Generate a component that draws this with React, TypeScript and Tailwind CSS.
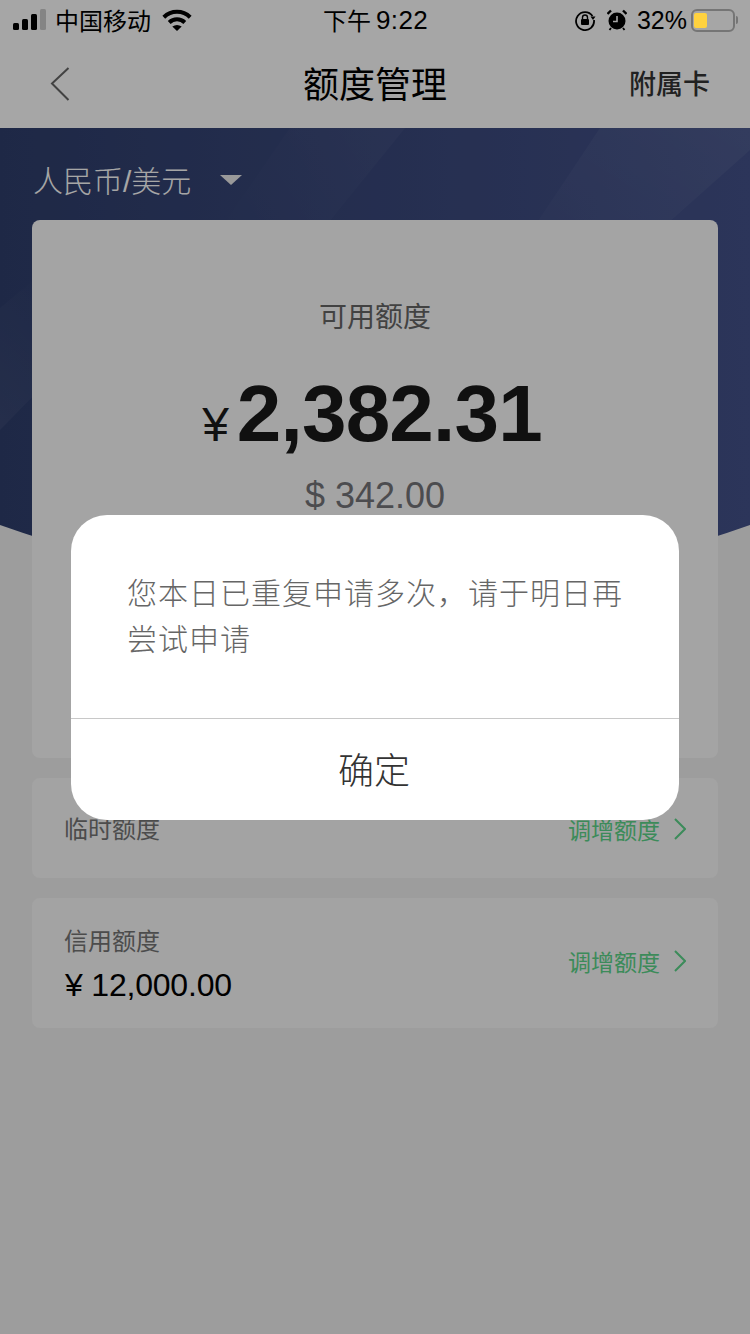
const latin = "font-['Liberation_Sans','Noto_Sans_CJK_SC',sans-serif]";

function StatusBar() {
  return (
    <div className="relative z-10 flex h-10 items-center bg-[#a6a6a6] pl-[13px] pr-[12px] text-[26px] text-black">
      <div className="flex w-[260px] items-center">
        <svg width="34" height="22" viewBox="0 0 34 22" className="mt-[-1px]">
          <rect x="0" y="14" width="6" height="7" rx="1.5" fill="#000" />
          <rect x="9" y="10" width="6" height="11" rx="1.5" fill="#000" />
          <rect x="18" y="5" width="6" height="16" rx="1.5" fill="#000" />
          <rect x="27" y="0" width="6" height="21" rx="1.5" fill="#000" opacity="0.2" />
        </svg>
        <span className="ml-[8px] text-[24px] leading-none">中国移动</span>
        <svg width="30" height="22" viewBox="0 0 30 22" className="ml-[11px]">
          <path d="M1.800 8.200a19 19 0 0 1 26.400 0" fill="none" stroke="#000" strokeWidth="4" />
          <path d="M7.200 13.500a11.200 11.200 0 0 1 15.600 0" fill="none" stroke="#000" strokeWidth="4" />
          <path d="M10.300 17.600q4.700-3.200 9.400 0L15 22Z" fill="#000" />
        </svg>
      </div>
      <div className="flex flex-1 items-center justify-center text-[24px] leading-none">
        下午
        <span className={`${latin} ml-[5px] text-[26px] tracking-[0.3px]`}>9:22</span>
      </div>
      <div className="flex w-[260px] items-center justify-end">
        <svg width="22" height="22" viewBox="0 0 22 22">
          <path d="M18.500 7A9 9 0 1 0 20 11" fill="none" stroke="#000" strokeWidth="1.800" />
          <path d="M16.500 7.500h5l-2.500 3.500Z" fill="#000" />
          <rect x="7" y="10" width="8" height="6" rx="1" fill="#000" />
          <path d="M8.500 10V8.500a2.500 2.500 0 0 1 5 0V10" fill="none" stroke="#000" strokeWidth="1.400" />
        </svg>
        <svg width="20" height="22" viewBox="0 0 20 22" className="ml-[11px]">
          <circle cx="10" cy="12" r="8.500" fill="#000" />
          <path d="M10 7v5.500H6" fill="none" stroke="#a6a6a6" strokeWidth="1.600" />
          <path d="M.5 5 4 1.500M19.500 5 16 1.500" stroke="#000" strokeWidth="2.400" />
          <path d="M4 19 2.500 21M16 19l1.500 2" stroke="#000" strokeWidth="1.800" />
        </svg>
        <span className={`${latin} ml-[10px] text-[25px] leading-none`}>32%</span>
        <div className="ml-[4px] flex items-center">
          <div className="h-[23px] w-[44px] rounded-[6px] border-2 border-[#757575] px-[1px] py-[2px]">
            <div className="h-full w-[13px] rounded-[2px] bg-[#ffd23f]" />
          </div>
          <div className="ml-[1px] h-[8px] w-[2px] rounded-r-full bg-[#757575]" />
        </div>
      </div>
    </div>
  );
}

function NavBar() {
  return (
    <div className="grid h-[88px] grid-cols-[1fr_auto_1fr] items-center bg-white pb-[4px] pl-[50px] pr-[40px]">
      <svg width="20" height="34" viewBox="0 0 20 34" className="mt-[3px]">
        <path d="M18.500 1 2 16.500 18.500 33" fill="none" stroke="#666" strokeWidth="2" />
      </svg>
      <div className="ml-[-10px] text-[36px] leading-none text-black">额度管理</div>
      <span className="justify-self-end text-[27px] font-medium leading-none text-[#333]">附属卡</span>
    </div>
  );
}

function HeroBackground() {
  return (
    <svg className="absolute left-0 top-0" width="750" height="412" viewBox="0 0 750 412">
      <defs>
        <linearGradient id="hero" x1="0" y1="0" x2="1" y2="0">
          <stop offset="0" stopColor="#2f3e6c" />
          <stop offset="1" stopColor="#44528a" />
        </linearGradient>
        <linearGradient id="bandLeft" x1="0" y1="1" x2="0.5" y2="0">
          <stop offset="0" stopColor="#fff" stopOpacity="0.05" />
          <stop offset="1" stopColor="#fff" stopOpacity="0" />
        </linearGradient>
        <linearGradient id="bandMid" x1="1" y1="0.3" x2="0" y2="0.7">
          <stop offset="0" stopColor="#fff" stopOpacity="0.03" />
          <stop offset="1" stopColor="#fff" stopOpacity="0" />
        </linearGradient>
        <linearGradient id="bandRight" x1="1" y1="0" x2="0" y2="1">
          <stop offset="0" stopColor="#fff" stopOpacity="0.06" />
          <stop offset="1" stopColor="#fff" stopOpacity="0" />
        </linearGradient>
      </defs>
      <path d="M0 0H750V397Q375 530 0 397Z" fill="url(#hero)" />
      <path d="M0 302 L100 200 L60 130 L0 180Z" fill="url(#bandLeft)" />
      <path d="M405 0 L300 130 L200 130 L290 0Z" fill="url(#bandMid)" />
      <path d="M600 0 L480 180 L640 120 L750 22 L750 0Z" fill="url(#bandRight)" />
    </svg>
  );
}

function LimitRow({ label, amount }: { label: string; amount?: string }) {
  return (
    <div className={`flex items-center justify-between rounded-[8px] bg-[#fafafa] pl-[32px] pr-[32px] ${amount ? "h-[130px]" : "h-[100px]"}`}>
      <div className={amount ? "mt-[2px]" : ""}>
        <div className="text-[24px] leading-[28px] text-[#757575]">{label}</div>
        {amount && <div className={`${latin} ml-[1px] mt-[13px] text-[32px] leading-[36px] tracking-[-0.2px] text-black`}>{amount}</div>}
      </div>
      <div className={`flex items-center text-[23px] leading-none text-[#5cd68a] ${amount ? "mb-[4px]" : "mt-[2px]"}`}>
        调增额度
        <svg width="12" height="22" viewBox="0 0 12 22" className="ml-[14px]">
          <path d="M1 1 11 11 1 21" fill="none" stroke="#5cd68a" strokeWidth="2" />
        </svg>
      </div>
    </div>
  );
}

export default function App() {
  return (
    <div className="relative h-[1334px] w-[750px] overflow-hidden bg-[#f2f2f2] font-['Noto_Sans_CJK_SC',sans-serif]">
      <StatusBar />
      <NavBar />

      <div className="relative px-[32px]">
        <HeroBackground />
        <div className="relative flex h-[92px] items-center pb-[2px] pl-[1px] pt-[14px]">
          <span className="text-[30px] font-light leading-none text-white">
            人民币<span className={latin}>/</span>美元
          </span>
          <div className="ml-[29px] h-0 w-0 border-x-[11px] border-t-[10px] border-x-transparent border-t-[#ececec]" />
        </div>

        <div className="relative flex h-[538px] flex-col items-center rounded-[8px] bg-[#fcfcfc] pt-[79px]">
          <div className="text-[28px] leading-[32px] text-[#666]">可用额度</div>
          <div className={`${latin} mt-[37px] flex items-baseline pr-[6px] text-[#1a1a1a]`}>
            <span className="text-[48px] leading-none">¥</span>
            <span className="ml-[8px] text-[80px] font-bold leading-[92px] tracking-[-0.8px]">2,382.31</span>
          </div>
          <div className={`${latin} mt-[15px] text-[36px] leading-[42px] text-[#75757a]`}>$ 342.00</div>
        </div>

        <div className="relative mt-[20px] flex flex-col gap-[20px]">
          <LimitRow label="临时额度" />
          <LimitRow label="信用额度" amount="¥ 12,000.00" />
        </div>
      </div>

      <div className="absolute inset-0 flex items-start justify-center bg-black/35 pt-[515px]">
        <div className="w-[608px] overflow-hidden rounded-[36px] bg-white">
          <div className="h-[203px] pl-[56px] pr-[40px] pt-[53px] text-[30px] font-light leading-[46px] tracking-[1px] text-[#666]">
            您本日已重复申请多次，请于明日再尝试申请
          </div>
          <div className="flex h-[102px] items-center justify-center border-t border-[#c8c8c8] pb-[4px] pr-[2px] text-[36px] font-light leading-none text-[#333]">
            确定
          </div>
        </div>
      </div>
    </div>
  );
}
